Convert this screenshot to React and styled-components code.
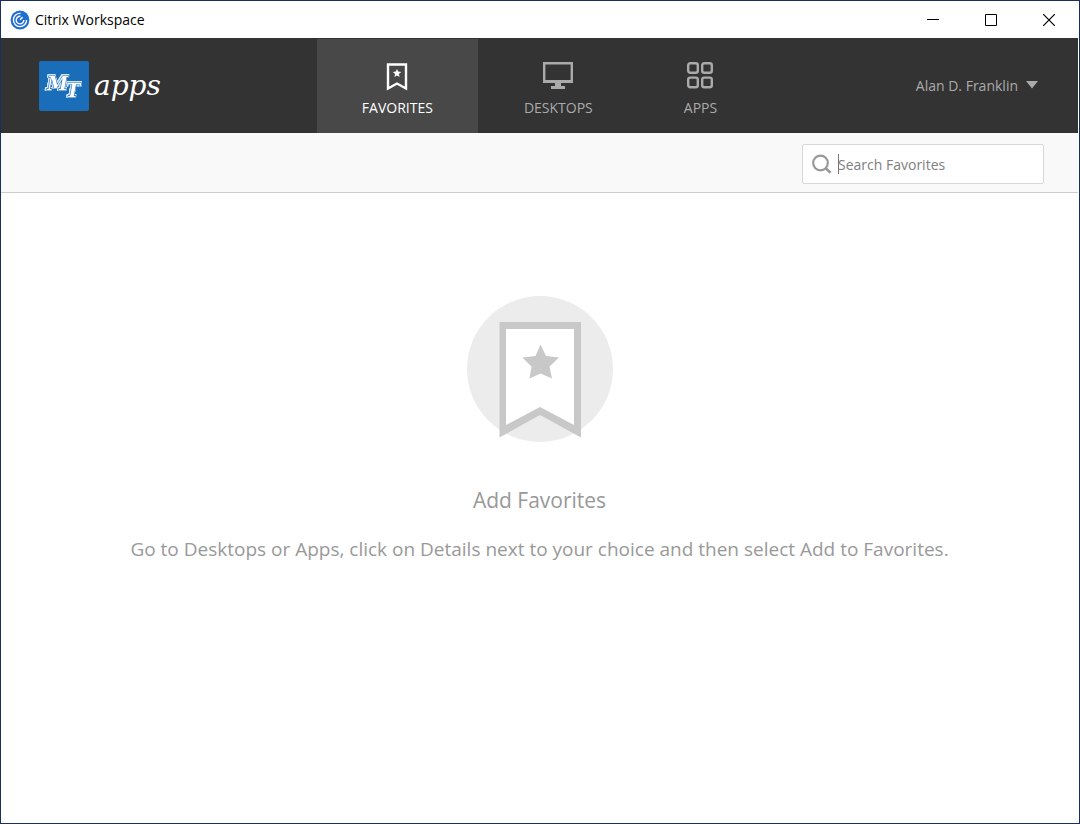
import { useState } from "react";
import styled, { createGlobalStyle } from "styled-components";

const colors = {
  frame: "#1b2f5e",
  header: "#333333",
  active: "#484848",
  muted: "#aaaaaa",
  toolbar: "#f9f9f9",
  line: "#cccccc",
  text: "#999999",
  brand: "#1a6db9",
};

const GlobalStyle = createGlobalStyle`
  * {
    box-sizing: border-box;
  }
  body {
    margin: 0;
    font-family: "Open Sans", "Noto Sans", sans-serif;
  }
  button {
    border: 0;
    padding: 0;
    background: none;
    font-family: inherit;
    cursor: pointer;
  }
`;

const WorkspaceIcon = () => (
  <svg width="20" height="20" viewBox="0 0 20 20" fill="none">
    <circle cx="10" cy="10" r="9.4" fill="#1f6fd0" />
    <g stroke="white" strokeWidth="1.4">
      <path d="M10.5 3.4A6.6 6.6 0 1 0 16.6 10" />
      <path d="M10.5 6.3A3.8 3.8 0 1 0 13.8 10" />
      <path d="M10 9.8L12.6 7.2" />
    </g>
  </svg>
);

const BrandMark = () => (
  <svg width="50" height="50" viewBox="0 0 50 50">
    <rect width="50" height="50" rx="2" fill={colors.brand} />
    <BrandLetters>
      <tspan x="8" y="29">
        M
      </tspan>
      <tspan x="27" y="36">
        T
      </tspan>
    </BrandLetters>
  </svg>
);

const BookmarkIcon = () => (
  <svg width="22" height="30" viewBox="0 0 22 30">
    <path
      d="M2 2.5H20V26.5L11 21.5L2 26.5Z"
      fill="none"
      stroke="currentColor"
      strokeWidth="2.4"
    />
    <path
      d="M11 7L12.2 9.6L15.2 10L12.9 12L13.6 15L11 13.4L8.4 15L9.1 12L6.8 10L9.8 9.6Z"
      fill="currentColor"
    />
  </svg>
);

const DesktopIcon = () => (
  <svg width="30" height="30" viewBox="0 0 30 30">
    <path
      d="M0 0H30V21H18V24H22V27H8V24H12V21H0ZM2.4 2.4V18H27.6V2.4Z"
      fill="currentColor"
      fillRule="evenodd"
    />
  </svg>
);

const AppsIcon = () => (
  <svg width="28" height="30" viewBox="0 0 28 30">
    <g fill="none" stroke="currentColor" strokeWidth="2.4">
      <rect x="2.2" y="1.2" width="9.6" height="9.6" rx="2" />
      <rect x="16.2" y="1.2" width="9.6" height="9.6" rx="2" />
      <rect x="2.2" y="15.6" width="9.6" height="9.6" rx="2" />
      <rect x="16.2" y="15.6" width="9.6" height="9.6" rx="2" />
    </g>
  </svg>
);

const SearchIcon = () => (
  <svg width="20" height="20" viewBox="0 0 20 20" fill="none">
    <circle cx="8.5" cy="9" r="7.3" stroke={colors.text} strokeWidth="2.2" />
    <path d="M13.6 14.2L18.6 18.8" stroke={colors.text} strokeWidth="2.6" />
  </svg>
);

const EmptyPicture = () => (
  <svg width="146" height="146" viewBox="0 0 146 146">
    <circle cx="73" cy="73" r="73" fill="#ececec" />
    <path d="M32.5 26H114V141.5L73 119L32.5 141.5Z" fill="#c8c8c8" />
    <path d="M39 33H107V129L73 111L39 129Z" fill="white" />
    <path
      d="M73.5 48.5L79 60L92 61.5L82.5 70.5L85 82.5L73.5 77.5L62.5 82.5L64.5 70.5L55.5 61.5L68.5 60Z"
      fill="#c8c8c8"
    />
  </svg>
);

const tabs = [
  { name: "FAVORITES", icon: <BookmarkIcon /> },
  { name: "DESKTOPS", icon: <DesktopIcon /> },
  { name: "APPS", icon: <AppsIcon /> },
];

const App = () => {
  const [selectedTab, setSelectedTab] = useState(0);

  return (
    <Window>
      <GlobalStyle />
      <TitleBar>
        <WorkspaceIcon />
        <WindowTitle>Citrix Workspace</WindowTitle>
        <WindowButton aria-label="Minimize">
          <svg width="12" height="12" viewBox="0 0 12 12">
            <path d="M0 5.5H12" stroke="black" />
          </svg>
        </WindowButton>
        <WindowButton aria-label="Maximize">
          <svg width="12" height="12" viewBox="0 0 12 12">
            <path d="M0.5 0.5H11.5V11.5H0.5Z" fill="none" stroke="black" />
          </svg>
        </WindowButton>
        <WindowButton aria-label="Close">
          <svg width="12" height="12" viewBox="0 0 12 12">
            <path d="M0 0L12 12M12 0L0 12" stroke="black" strokeWidth="1.2" />
          </svg>
        </WindowButton>
      </TitleBar>

      <Header>
        <Brand href="#">
          <BrandMark />
          <BrandName>apps</BrandName>
        </Brand>
        <Nav>
          {tabs.map((tab, index) => (
            <Tab
              key={tab.name}
              $active={selectedTab === index}
              onClick={() => setSelectedTab(index)}
            >
              {tab.icon}
              {tab.name}
            </Tab>
          ))}
        </Nav>
        <UserMenu>
          Alan D. Franklin
          <svg width="12" height="10" viewBox="0 0 12 10">
            <path d="M0 0H12L6 7.5Z" fill="currentColor" />
          </svg>
        </UserMenu>
      </Header>

      <Toolbar>
        <SearchBox>
          <SearchIcon />
          <SearchField>
            <SearchInput aria-label="Search Favorites" placeholder="Search Favorites" />
            <Caret />
          </SearchField>
        </SearchBox>
      </Toolbar>

      <EmptyState>
        <EmptyPicture />
        <EmptyTitle>Add Favorites</EmptyTitle>
        <EmptyText>
          Go to Desktops or Apps, click on Details next to your choice and then
          select Add to Favorites.
        </EmptyText>
      </EmptyState>
    </Window>
  );
};

const Window = styled.div`
  display: flex;
  flex-direction: column;
  min-height: 100vh;
  padding-right: 1px;
  border: 1px solid ${colors.frame};
  background-color: white;
`;

const TitleBar = styled.div`
  display: flex;
  align-items: center;
  height: 37px;
  padding-left: 9px;
`;

const WindowTitle = styled.div`
  flex: 1;
  padding-left: 5px;
  font-size: 14px;
  color: black;
`;

const WindowButton = styled.button`
  display: flex;
  align-items: center;
  justify-content: center;
  width: 58px;
  height: 36px;
`;

const Header = styled.header`
  display: grid;
  grid-template-columns: 1fr auto 1fr;
  align-items: center;
  height: 95px;
  padding: 0 38px;
  background-color: ${colors.header};
`;

const Brand = styled.a`
  display: flex;
  align-items: center;
  gap: 5px;
  color: white;
  text-decoration: none;
`;

/* white letters, a brand coloured gap, then a thin white outline */
const BrandLetters = styled.text`
  font-family: "DejaVu Serif", serif;
  font-size: 19px;
  font-style: italic;
  font-weight: bold;
  fill: white;
  stroke: ${colors.brand};
  stroke-width: 1.2px;
  paint-order: stroke;
  filter: drop-shadow(0.5px 0 0 #d5e5f3) drop-shadow(-0.5px 0 0 #d5e5f3)
    drop-shadow(0 0.5px 0 #d5e5f3) drop-shadow(0 -0.5px 0 #d5e5f3);
`;

const BrandName = styled.span`
  font-family: "DejaVu Serif", serif;
  font-size: 28px;
  font-style: italic;
  line-height: 36px;
`;

const Nav = styled.nav`
  display: flex;
  align-self: end;
  gap: 1px;
`;

const Tab = styled.button`
  display: flex;
  flex-direction: column;
  align-items: center;
  gap: 6px;
  height: 94px;
  padding: 23px 45px 0;
  background-color: ${(props) => (props.$active ? colors.active : "transparent")};
  color: ${(props) => (props.$active ? "white" : colors.muted)};
  font-size: 14px;
  line-height: 20px;
`;

const UserMenu = styled.button`
  display: flex;
  align-items: center;
  justify-self: end;
  gap: 8px;
  padding-right: 2px;
  color: ${colors.muted};
  font-size: 14px;
  line-height: 20px;
`;

const Toolbar = styled.div`
  display: flex;
  align-items: center;
  justify-content: flex-end;
  height: 60px;
  padding: 3px 34px 0 0;
  border-bottom: 1px solid ${colors.line};
  background-color: ${colors.toolbar};
`;

const SearchBox = styled.label`
  display: flex;
  align-items: center;
  gap: 6px;
  width: 242px;
  height: 40px;
  padding: 0 9px;
  border: 1px solid #d8d8d8;
  border-radius: 2px;
  background-color: white;
`;

const SearchField = styled.span`
  position: relative;
  display: flex;
  flex: 1;
`;

const SearchInput = styled.input`
  width: 100%;
  padding: 1px 0 0;
  border: 0;
  outline: 0;
  background: none;
  font-family: inherit;
  font-size: 14px;
  line-height: 20px;
  &::placeholder {
    color: #808080;
    opacity: 1;
  }
`;

const Caret = styled.span`
  position: absolute;
  top: 0;
  left: 0;
  width: 1px;
  height: 20px;
  background-color: #777777;
`;

const EmptyState = styled.main`
  display: flex;
  flex: 1;
  flex-direction: column;
  align-items: center;
  padding: 103px 20px 40px;
  color: ${colors.text};
  text-align: center;
`;

const EmptyTitle = styled.h1`
  margin: 42px 0 19px;
  font-size: 21px;
  font-weight: 400;
  line-height: 32px;
`;

const EmptyText = styled.p`
  margin: 0;
  font-size: 19px;
  line-height: 28px;
`;

export default App;
